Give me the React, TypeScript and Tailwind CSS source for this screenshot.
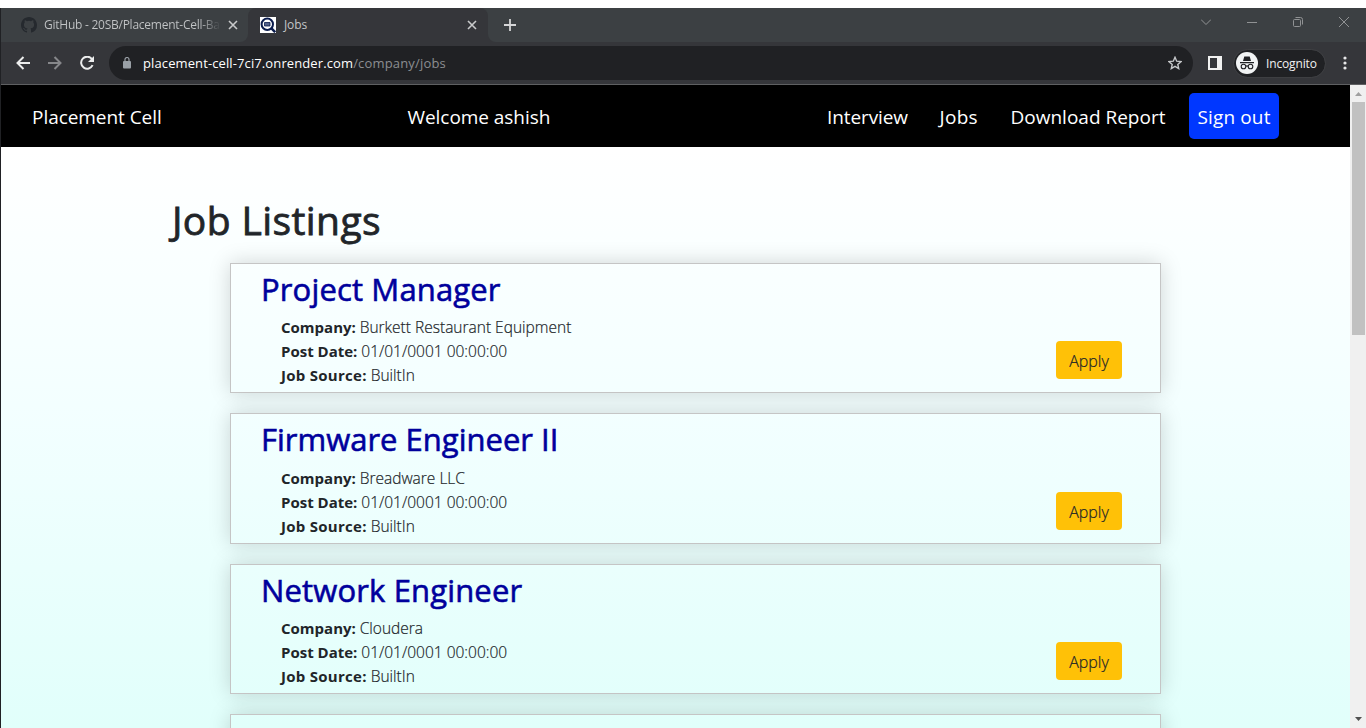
import { ReactNode } from "react";

const jobs = [
  { title: "Project Manager", company: "Burkett Restaurant Equipment", tt: "tracking-[0.15px]" },
  { title: "Firmware Engineer II", company: "Breadware LLC", tt: "tracking-[0px]" },
  { title: "Network Engineer", company: "Cloudera", tt: "tracking-[0.15px]" },
];

function Row({ label, children, className = "" }: { label: string; children: ReactNode; className?: string }) {
  return (
    <p className="h-6 whitespace-nowrap text-[15px] leading-6">
      <b className={"font-bold " + className}>{label}</b>{" "}
      <span className="text-[15.5px] font-light [-webkit-text-stroke:0.2px]">{children}</span>
    </p>
  );
}

function Job({ title, company, tt }: (typeof jobs)[number]) {
  return (
    <article className="flex h-[130.4px] w-[931px] shrink-0 items-end justify-between border border-[#c5c5c5] pr-[38px] pb-[13px] pl-[30px] shadow-[0_0_20px_rgba(0,0,0,0.17)]">
      <div className="mb-[-8px] text-[#212529]">
        <h2 className={"mb-[7px] h-[38.4px] text-[31px] leading-[38.4px] font-normal whitespace-nowrap text-[#00009c] [-webkit-text-stroke:0.6px] " + tt}>{title}</h2>
        <div className="pl-5">
          <Row label="Company:" className="tracking-[0px]">{company}</Row>
          <Row label="Post Date:" className="tracking-[0px]">01/01/0001 00:00:00</Row>
          <Row label="Job Source:" className="tracking-[0.28px]">BuiltIn</Row>
        </div>
      </div>
      <button className="h-[38px] w-[66px] rounded bg-[#ffc107] pt-[2px] text-[16px] font-light text-[#212529] [-webkit-text-stroke:0.2px]">Apply</button>
    </article>
  );
}

function Close({ className = "" }: { className?: string }) {
  return (
    <svg className={"size-[10px] shrink-0 " + className} viewBox="0 0 10 10" stroke="#c9cacb" strokeWidth="1.6">
      <path d="M1 1l8 8M9 1l-8 8" />
    </svg>
  );
}

function Browser() {
  return (
    <header className="h-[77px] shrink-0 border-b border-[#5f6062] bg-[#35363a] text-[12px]">
      <div className="flex h-[34px] bg-[#35363a]">
        <div className="flex w-[247px] items-center rounded-br-lg bg-[#3c4043] pl-[20px] text-[#bfc1c3]">
          <svg className="size-4 shrink-0" viewBox="0 0 16 16" fill="#25292e">
            <path d="M8 0C3.58 0 0 3.58 0 8c0 3.54 2.29 6.53 5.47 7.59.4.07.55-.17.55-.38 0-.19-.01-.82-.01-1.49-2.01.37-2.53-.49-2.69-.94-.09-.23-.48-.94-.82-1.13-.28-.15-.68-.52-.01-.53.63-.01 1.08.58 1.23.82.72 1.21 1.87.87 2.33.66.07-.52.28-.87.51-1.07-1.78-.2-3.64-.89-3.64-3.95 0-.87.31-1.59.82-2.15-.08-.2-.36-1.02.08-2.12 0 0 .67-.21 2.2.82a7.6 7.6 0 0 1 4 0c1.53-1.04 2.2-.82 2.2-.82.44 1.1.16 1.92.08 2.12.51.56.82 1.27.82 2.15 0 3.07-1.87 3.75-3.65 3.95.29.25.54.73.54 1.48 0 1.07-.01 1.93-.01 2.2 0 .21.15.46.55.38A8 8 0 0 0 16 8c0-4.42-3.58-8-8-8z" />
          </svg>
          <span className="ml-[7px] w-[177px] overflow-hidden bg-linear-to-r from-[#c3c5c7] from-88% to-[#3c4043] bg-clip-text text-[12px] tracking-[-0.25px] whitespace-nowrap text-transparent">GitHub - 20SB/Placement-Cell-Ba</span>
          <Close className="ml-[7px]" />
        </div>
        <div className="w-[240px] bg-[#3c4043]">
          <div className="flex h-full items-center rounded-t-lg bg-[#35363a] pl-3 text-[#c3c5c7]">
            <svg className="size-4 shrink-0 bg-white" viewBox="0 0 16 16" fill="none" stroke="#0b1c4d">
              <circle cx="7.3" cy="7.2" r="5.7" strokeWidth="2" />
              <path d="M11.2 11.2l4 4" strokeWidth="2.5" />
              <path d="M4.5 5.5h5.5v3.5H4.500z" fill="#53618a" strokeWidth="0.8" />
            </svg>
            <span className="ml-2 w-[183px] text-[12px] tracking-[-0.1px]">Jobs</span>
            <Close />
          </div>
        </div>
        <div className="flex flex-1 items-center rounded-bl-lg bg-[#3c4043] pl-4">
          <svg className="size-3" viewBox="0 0 12 12" stroke="#d5d6d7" strokeWidth="1.8"><path d="M6 0v12M0 6h12" /></svg>
          <div className="mb-[6px] ml-auto flex items-center pr-[17px]">
            <svg className="h-[6px] w-[10px]" viewBox="0 0 10 6" fill="none" stroke="#909294"><path d="M0 .5l5 5 5-5" /></svg>
            <svg className="ml-9 h-px w-[10px]" viewBox="0 0 10 1"><path d="M0 0h10v1H0z" fill="#909294" /></svg>
            <svg className="ml-9 size-[10px]" viewBox="0 0 10 10" fill="none" stroke="#909294"><rect x=".5" y="2.5" width="7" height="7" rx="1" /><path d="M2.5.5h5a2 2 0 0 1 2 2v5" /></svg>
            <svg className="ml-9 size-[10px]" viewBox="0 0 10 10" stroke="#909294"><path d="M0 0l10 10M10 0L0 10" /></svg>
          </div>
        </div>
      </div>
      <div className="flex h-[42px] items-center pl-[15px]">
        <svg className="h-[14px] w-[14px]" viewBox="0 0 14 14" fill="none" stroke="#eceded" strokeWidth="2"><path d="M14 7H1.5M7.5 1l-6 6 6 6" /></svg>
        <svg className="ml-[18px] h-[14px] w-[14px]" viewBox="0 0 14 14" fill="none" stroke="#86878a" strokeWidth="2"><path d="M0 7h12.5M6.5 1l6 6-6 6" /></svg>
        <svg className="ml-[18px] h-[14px] w-[15px]" viewBox="0 0 15 14" fill="none" stroke="#eceded" strokeWidth="2"><path d="M12.6 9.2a6 6 0 1 1-.7-6.2" /><path d="M14 0v6H8z" fill="#eceded" stroke="none" /></svg>
        <div className="ml-[14px] flex h-[34px] w-[1084px] items-center rounded-full bg-[#202124] pr-[11px] pl-[14px]">
          <svg className="h-[12px] w-[8px]" viewBox="0 0 8 12"><rect y="4" width="8" height="7.5" rx="1" fill="#9aa0a6" /><path d="M2 4.500V2.500a2 2 0 0 1 4 0v2" fill="none" stroke="#9aa0a6" strokeWidth="1.200" /></svg>
          <p className="ml-3 pt-px text-[13px] tracking-[0.17px] whitespace-nowrap text-[#8c8e91]"><span className="tracking-[0.11px] text-white">placement-cell-7ci7.onrender.com</span>/company/jobs</p>
          <svg className="ml-auto size-[14px]" viewBox="0 0 14 14" fill="none" stroke="#c6c8ca" strokeWidth="1.4"><path d="M7 1.300l1.700 3.900 4.300.4-3.200 2.800.9 4.200L7 10.400l-3.700 2.200.9-4.200L1 5.600l4.300-.4z" /></svg>
        </div>
        <svg className="ml-[15px] size-[14px]" viewBox="0 0 14 14"><path d="M0 0h14v14H0zM2 2v10h7V2z" fill="#f1f1f1" fillRule="evenodd" /></svg>
        <div className="ml-[12px] flex h-[27px] w-[91px] items-center rounded-full bg-[#202124] pl-[2px] text-[12px] text-[#f1f1f1] outline outline-[#3e3f42]">
          <svg className="size-[22px] shrink-0" viewBox="0 0 22 22"><circle cx="11" cy="11" r="11" fill="#f1f3f4" /><path d="M8.300 4.500L13.700 4.500 15 9H7zM4 10h14v1.200H4z" fill="#202124" /><g fill="none" stroke="#202124" strokeWidth="1.100"><circle cx="7.500" cy="14.500" r="2.300" /><circle cx="14.500" cy="14.500" r="2.300" /><path d="M9.800 14.300q1.200-.8 2.400 0" /></g></svg>
          <span className="ml-2 pt-px tracking-[-0.15px]">Incognito</span>
        </div>
        <svg className="ml-[18px] h-[14px] w-[4px]" viewBox="0 0 4 14" fill="#e8e8e9"><circle cx="2" cy="2" r="1.600" /><circle cx="2" cy="7" r="1.600" /><circle cx="2" cy="12" r="1.600" /></svg>
      </div>
    </header>
  );
}

export default function App() {
  return (
    <div className="flex h-[728px] w-[1366px] flex-col overflow-hidden bg-white pt-2 font-['Open_Sans',sans-serif]">
      <div className="flex min-h-0 flex-1 flex-col border-l border-[#202124]">
        <Browser />
        <div className="flex min-h-0 flex-1">
          <main className="flex min-w-0 flex-1 flex-col bg-linear-to-b from-white from-10% via-[#f3ffff] via-50% to-[#e1fffb]">
            <nav className="flex h-[62px] shrink-0 items-center bg-black pt-[2px] pl-[31px] text-[19px] whitespace-nowrap text-white">
              <span className="w-[375.5px] tracking-[-0.05px]">Placement Cell</span>
              <span className="w-[419.5px] tracking-[-0.05px]">Welcome ashish</span>
              <span className="w-[112.5px] tracking-[-0.1px]">Interview</span>
              <span className="w-[71px] tracking-[0.3px]">Jobs</span>
              <span className="w-[178.5px]">Download Report</span>
              <button className="-mt-[2px] h-[46px] w-[90px] rounded-[5px] bg-[#0037ff] pt-[2px] tracking-[0.15px]">Sign out</button>
            </nav>
            <h1 className="mt-[49px] ml-[171px] h-12 text-[39px] leading-12 font-normal tracking-[0.4px] text-[#212529] [-webkit-text-stroke:0.8px]">Job Listings</h1>
            <div className="mt-[19px] ml-[229px] flex flex-col gap-5">
              {jobs.map((j) => <Job key={j.title} {...j} />)}
              <article className="h-[130.4px] w-[931px] shrink-0 border border-[#c5c5c5] shadow-[0_0_20px_rgba(0,0,0,0.17)]" />
            </div>
          </main>
          <aside className="flex w-4 flex-col items-center bg-[#f0f0f0]">
            <svg className="h-[17px] w-[7px]" viewBox="0 0 7 17"><path d="M0 11L3.500 7 7 11z" fill="#a0a0a0" /></svg>
            <div className="h-[233px] w-[13px] bg-[#c1c1c1]" />
            <svg className="mt-auto h-[17px] w-[7px]" viewBox="0 0 7 17"><path d="M0 6l3.500 4L7 6z" fill="#505050" /></svg>
          </aside>
        </div>
      </div>
    </div>
  );
}
